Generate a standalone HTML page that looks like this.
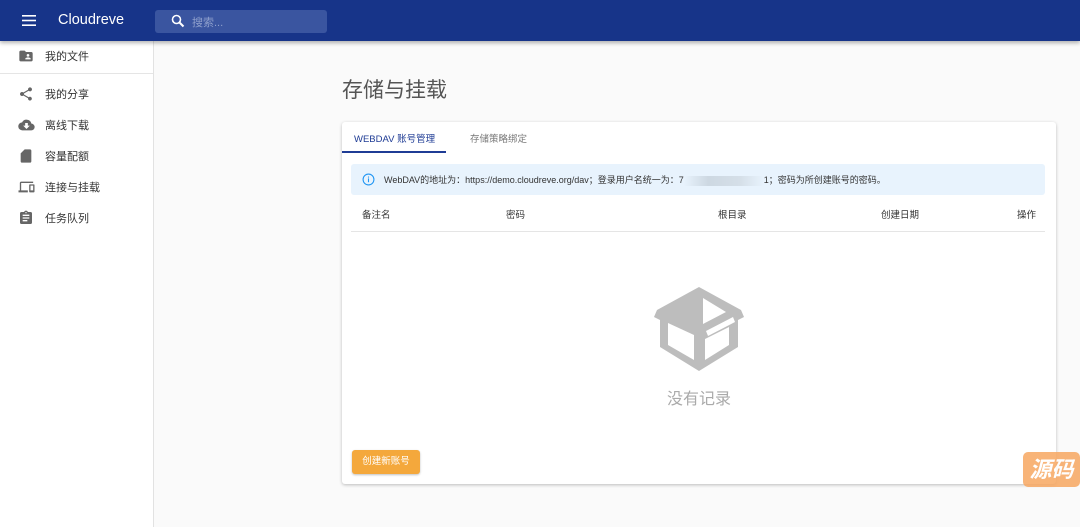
<!DOCTYPE html>
<html><head><meta charset="utf-8"><style>
*{margin:0;padding:0;box-sizing:border-box}
body{width:1080px;height:527px;background:#fafafa;font-family:"Liberation Sans","Noto Sans CJK SC",sans-serif;position:relative;overflow:hidden;color:#333}
.top{position:absolute;left:0;top:0;width:1080px;height:41px;background:#173489;box-shadow:0 2px 4px rgba(0,0,0,.3);z-index:2}
.title{position:absolute;left:58px;top:12px;color:#fff;font-size:14.5px}
.search{position:absolute;left:155px;top:10px;width:172px;height:23px;background:#3a55a0;border-radius:3px}
.search span{position:absolute;left:37px;top:4px;font-size:11px;color:#8fa0cc}
.side{position:absolute;left:0;top:41px;width:154px;height:486px;background:#fff;border-right:1px solid #e2e2e2}
.item{position:absolute;left:0;height:20px;width:153px;font-size:11px;color:#333}
.item svg{position:absolute;left:18px;top:1px}
.item span{position:absolute;left:45px;top:1px}
h1{position:absolute;left:342px;top:74px;font-size:21px;font-weight:normal;color:#555}
.card{position:absolute;left:342px;top:122px;width:714px;height:362px;background:#fff;border-radius:3px;box-shadow:0 1px 3px rgba(0,0,0,.25)}
.tab{position:absolute;top:9px;font-size:9.5px}
.ind{position:absolute;left:0;top:29px;width:104px;height:2px;background:#1f3c95}
.info{position:absolute;left:9px;top:42px;width:694px;height:31px;background:#e8f3fd;border-radius:3px;font-size:9px;color:#333}
.th{position:absolute;top:85px;font-size:9.5px;color:#333}
.line{position:absolute;left:9px;top:109px;width:694px;height:1px;background:#e5e5e5}
.btn{position:absolute;left:10px;top:328px;width:68px;height:24px;background:#f4a83c;border-radius:3px;color:#fff;font-size:9.5px;text-align:center;line-height:24px;box-shadow:0 1px 2px rgba(0,0,0,.25)}
.badge{position:absolute;left:1023px;top:452px;width:57px;height:35px;background:#f7a761;opacity:.85;border-radius:5px;color:#fff;font-size:22px;font-style:italic;font-weight:bold;text-align:center;line-height:35px}
</style></head><body>
<div class="top">
<svg style="position:absolute;left:22px;top:15px" width="14" height="11"><rect y="0" width="14" height="1.6" fill="#fff"/><rect y="4.7" width="14" height="1.6" fill="#fff"/><rect y="9.4" width="14" height="1.6" fill="#fff"/></svg>
<div class="title">Cloudreve</div>
<div class="search"><svg style="position:absolute;left:16px;top:4px" width="14" height="14" viewBox="0 0 14 14"><circle cx="5.5" cy="5.5" r="4" fill="none" stroke="#fff" stroke-width="1.6"/><path d="M8.5 8.5 L12.5 12.5" stroke="#fff" stroke-width="2"/></svg><span>搜索...</span></div>
</div>
<div class="side">
<div class="item" style="top:6px"><svg width="16" height="16" viewBox="0 0 24 24"><path d="M20 6h-8l-2-2H4c-1.1 0-2 .9-2 2v12c0 1.1.9 2 2 2h16c1.1 0 2-.9 2-2V8c0-1.1-.9-2-2-2zm-5 3a2 2 0 1 1 0 4 2 2 0 0 1 0-4zm4 8h-8v-1c0-1.3 2.7-2 4-2s4 .7 4 2v1z" fill="#666"/></svg><span>我的文件</span></div>
<div style="position:absolute;left:0;top:32px;width:153px;height:1px;background:#e5e5e5"></div>
<div class="item" style="top:44px"><svg width="16" height="16" viewBox="0 0 24 24"><path d="M18 16.1c-.8 0-1.5.3-2 .8l-7.1-4.2c.1-.2.1-.5.1-.7s0-.5-.1-.7L16 7.2c.5.5 1.2.8 2 .8 1.7 0 3-1.3 3-3s-1.3-3-3-3-3 1.3-3 3c0 .2 0 .5.1.7L8 9.8C7.5 9.3 6.8 9 6 9c-1.7 0-3 1.3-3 3s1.3 3 3 3c.8 0 1.5-.3 2-.8l7.1 4.2c-.1.2-.1.4-.1.6 0 1.6 1.3 2.9 2.9 2.9s2.9-1.3 2.9-2.9-1.2-2.9-2.8-2.9z" fill="#666"/></svg><span>我的分享</span></div>
<div class="item" style="top:75px"><svg width="17" height="16" viewBox="0 0 24 24"><path d="M19.4 10A7.5 7.5 0 0 0 5.4 8 6 6 0 0 0 6 20h13a5 5 0 0 0 .4-10zM17 13l-5 5-5-5h3V9h4v4h3z" fill="#666"/></svg><span>离线下载</span></div>
<div class="item" style="top:106px"><svg width="16" height="16" viewBox="0 0 24 24"><path d="M18 2h-8L4 8v12c0 1.1.9 2 2 2h12c1.1 0 2-.9 2-2V4c0-1.1-.9-2-2-2z" fill="#666"/></svg><span>容量配额</span></div>
<div class="item" style="top:137px"><svg width="17" height="16" viewBox="0 0 24 24"><path d="M4 6h18V4H4c-1.1 0-2 .9-2 2v11H0v3h14v-3H4V6zm19 2h-6c-.5 0-1 .5-1 1v10c0 .5.5 1 1 1h6c.5 0 1-.5 1-1V9c0-.5-.5-1-1-1zm-1 9h-4v-7h4v7z" fill="#666"/></svg><span>连接与挂载</span></div>
<div class="item" style="top:168px"><svg width="16" height="16" viewBox="0 0 24 24"><path d="M19 3h-4.2C14.4 1.8 13.3 1 12 1s-2.4.8-2.8 2H5c-1.1 0-2 .9-2 2v14c0 1.1.9 2 2 2h14c1.1 0 2-.9 2-2V5c0-1.1-.9-2-2-2zm-7 0c.6 0 1 .4 1 1s-.4 1-1 1-1-.4-1-1 .4-1 1-1zm2 14H7v-2h7v2zm3-4H7v-2h10v2zm0-4H7V7h10v2z" fill="#666"/></svg><span>任务队列</span></div>
</div>
<h1>存储与挂载</h1>
<div class="card">
<div class="tab" style="left:12px;color:#1f3c95">WEBDAV 账号管理</div>
<div class="tab" style="left:128px;color:#777">存储策略绑定</div>
<div class="ind"></div>
<div class="info">
<svg style="position:absolute;left:11px;top:9px" width="13" height="13" viewBox="0 0 24 24"><circle cx="12" cy="12" r="10" fill="none" stroke="#2196f3" stroke-width="2"/><rect x="11" y="10" width="2" height="7" fill="#2196f3"/><rect x="11" y="6.5" width="2" height="2" fill="#2196f3"/></svg>
<span style="position:absolute;left:33px;top:9px;white-space:nowrap">WebDAV的地址为：https://demo.cloudreve.org/dav；登录用户名统一为：7<span style="display:inline-block;width:80px;height:10px;background:linear-gradient(90deg,#e8f3fd,#cdd8e2 30%,#d5dfe8 70%,#e8f3fd);vertical-align:middle"></span>1；密码为所创建账号的密码。</span>
</div>
<div class="th" style="left:20px">备注名</div>
<div class="th" style="left:164px">密码</div>
<div class="th" style="left:376px">根目录</div>
<div class="th" style="left:539px">创建日期</div>
<div class="th" style="left:675px">操作</div>
<div class="line"></div>
<svg style="position:absolute;left:311px;top:163px" width="92" height="88" viewBox="0 0 92 88"><path d="M46 2 L88 25 L91 32 L85 35 L85 62 L46 86 L7 62 L7 35 L1 32 L4 25 Z" fill="#bdbdbd"/><path d="M15 38 L41 50 L41 75 L15 60 Z" fill="#fff"/><path d="M50 13 L73 27 L50 39 Z" fill="#fff"/><path d="M52 54 L76 42 L76 60 L52 75 Z" fill="#fff"/><path d="M53 46 L80 32 L82 37 L55 51 Z" fill="#fff"/></svg>
<div style="position:absolute;left:325px;top:263px;font-size:16px;color:#aaa">没有记录</div>
<div class="btn">创建新账号</div>
</div>
<div class="badge">源码</div>
</body></html>
